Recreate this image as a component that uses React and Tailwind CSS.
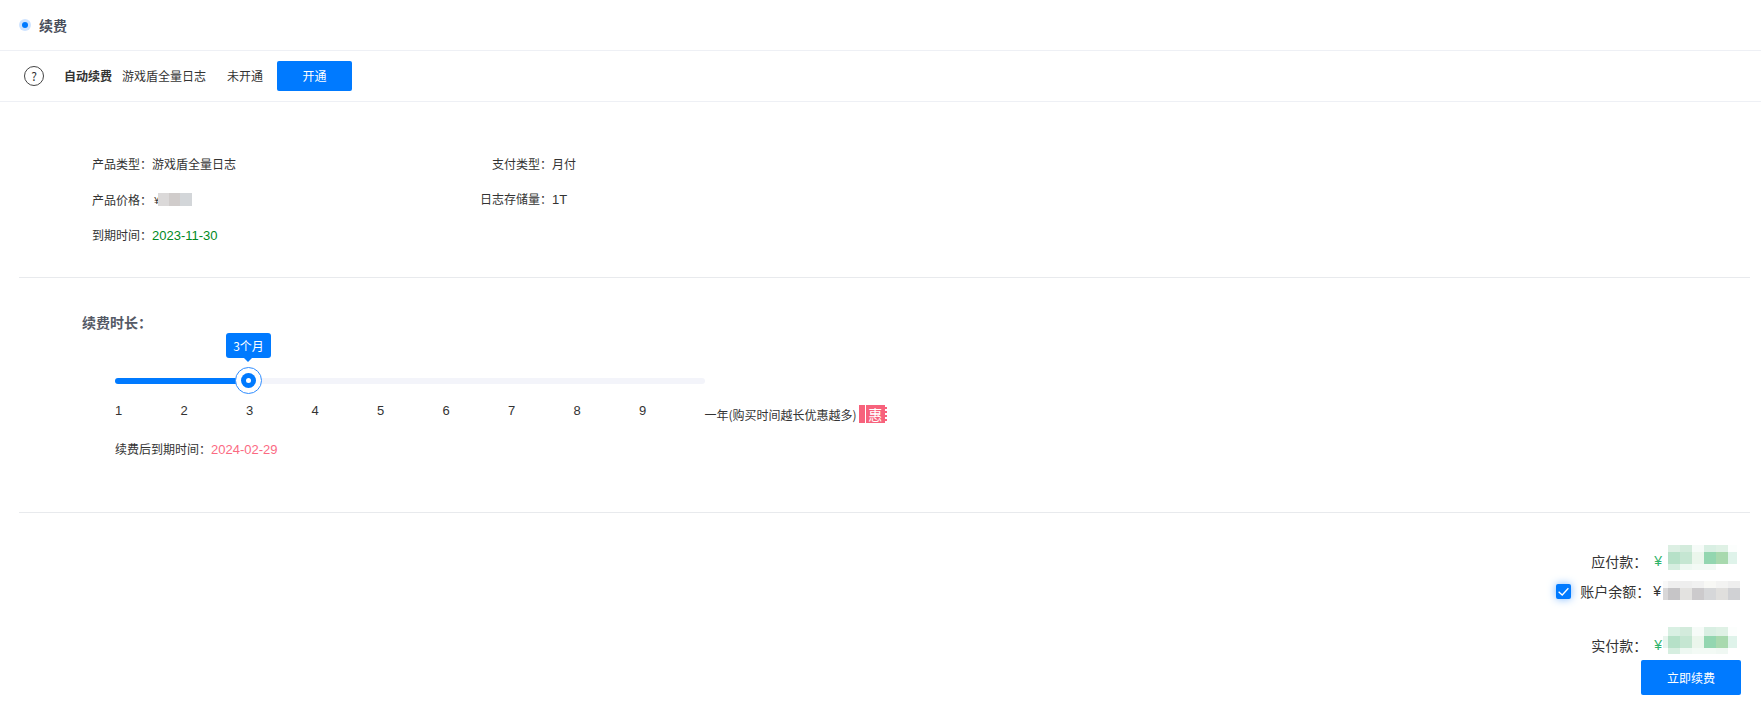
const latin = "font-['Liberation_Sans',sans-serif] text-[13px]";

// 打码区域：每行 [高度, 颜色...]
function Mosaic({ widths, rows, className }) {
  return (
    <div className={"flex shrink-0 flex-col " + className}>
      {rows.map((row, i) => (
        <div key={i} className="flex" style={{ height: row[0] }}>
          {row.slice(1).map((c, j) => (
            <div key={j} style={{ width: widths[j], background: c }} />
          ))}
        </div>
      ))}
    </div>
  );
}

const payWidths = [12, 12, 12, 12, 12, 9];
const payRows = [
  [7, "#dcefe3", "#d3ebdc", "#f6fbf8", "#d9efe3", "#dff1e5", "#fcfefd"],
  [12, "#b6e1c8", "#c5e6d2", "#ebf6ec", "#93d6b0", "#a8d9ae", "#dff3ea"],
  [6, "#d6eee0", "#eef8f2", "#f3faf5", "#f3faf5", "#ffffff", "#ffffff"],
];
const realWidths = [5, 12, 12, 12, 12, 12, 9];
const realRows = [
  [9, "#ffffff", "#d9f0e3", "#d3ebdc", "#f6fbf8", "#d9efe3", "#dff1e5", "#fcfefd"],
  [12, "#e8f5ee", "#b6e1c8", "#c5e6d2", "#ebf6ec", "#93d6b0", "#a8d9ae", "#dff3ea"],
  [6, "#ffffff", "#d6eee0", "#eef8f2", "#f3faf5", "#f3faf5", "#f0f8f3", "#ffffff"],
];
const balanceWidths = [5, 12, 12, 12, 12, 12, 12];
const balanceRows = [
  [7, "#f8f8f8", "#efefef", "#eeeeee", "#f1f1f1", "#f8f8f5", "#f3f3f2", "#eeeeee"],
  [12, "#d8d7d8", "#c6c5c7", "#e3e2e0", "#cccacc", "#d6d7d9", "#e0dfdd", "#d0d1d4"],
];

export default function App() {
  const nums = [1, 2, 3, 4, 5, 6, 7, 8, 9];
  return (
    <div className="h-[720px] w-full overflow-hidden bg-white font-['Noto_Sans_CJK_SC','Noto_Sans',sans-serif] text-[12px] text-[#333]">
      {/* 标题 */}
      <div className="flex h-[51px] items-center border-b border-[#eef0f5] pl-[19px]">
        <span className="flex h-[12px] w-[12px] items-center justify-center rounded-full bg-[#cfe4ff]">
          <span className="h-[6px] w-[6px] rounded-full bg-[#007aff]" />
        </span>
        <span className="ml-[8px] text-[14px] font-bold text-[#4a4f5c]">续费</span>
      </div>

      {/* 自动续费 */}
      <div className="flex h-[51px] items-center border-b border-[#eef0f5] pl-6">
        <span className="flex h-5 w-5 items-center justify-center rounded-full border border-[#444] text-[12px] leading-none">?</span>
        <span className="ml-[20px] font-bold">自动续费</span>
        <span className="ml-[10px]">游戏盾全量日志</span>
        <span className="ml-[21px]">未开通</span>
        <button className="ml-[14px] h-[30px] w-[75px] rounded-[2px] bg-[#007aff] text-white">开通</button>
      </div>

      {/* 产品信息 */}
      <div className="ml-[19px] mr-[11px] h-[176px] border-b border-[#e8eaed] pt-[53px]">
        <div className="grid grid-cols-[400px_auto] justify-start gap-y-[17px] pl-[73px] leading-[18px]">
          <div>产品类型：游戏盾全量日志</div>
          <div>支付类型：月付</div>
          <div className="flex items-center">
            产品价格：
            <span className="-mr-[2px] ml-[2px] text-[10px]">¥</span>
            <span className="relative flex h-[13px]">
              <span className="w-[11px] bg-[#dbd9d9]" />
              <span className="w-[11px] bg-[#d0cccb]" />
              <span className="w-[12px] bg-[#d3d6d9]" />
            </span>
          </div>
          <div className="-ml-[12px]">日志存储量：<span className={latin}>1T</span></div>
          <div>到期时间：<span className={latin + " text-[#008a1e]"}>2023-11-30</span></div>
        </div>
      </div>

      {/* 续费时长 */}
      <div className="ml-[19px] mr-[11px] h-[235px] border-b border-[#e8eaed] pl-[63px]">
        <div className="pt-[34px] text-[14px] font-bold leading-[20px] text-[#555a66]">续费时长：</div>
        <div className="relative ml-[33px] mt-[1px] h-[61px] w-[590px]">
          <div className="absolute left-0 top-[45px] h-[6px] w-full rounded-full bg-[#f3f4fa]" />
          <div className="absolute left-0 top-[45px] h-[6px] w-[133px] rounded-full bg-[#007aff]" />
          <div className="absolute left-[120px] top-[34px] flex h-[27px] w-[27px] items-center justify-center rounded-full border border-[#2f8dff] bg-white">
            <span className="flex h-[15px] w-[15px] items-center justify-center rounded-full bg-[#007aff]">
              <span className="h-[5px] w-[5px] rounded-full bg-white" />
            </span>
          </div>
          <div className="absolute left-[111px] top-0 flex h-[25px] w-[45px] items-center justify-center rounded-[3px] bg-[#007aff] text-white">3个月</div>
          <div className="absolute left-[129px] top-[25px] h-0 w-0 border-x-[4px] border-t-[4px] border-x-transparent border-t-[#007aff]" />
        </div>
        <div className="ml-[33px] mt-[8px] flex h-[19px] items-start leading-[18px]">
          {nums.map((n) => (
            <span key={n} className={"w-[65.5px] " + latin}>{n}</span>
          ))}
          <span className="mt-[4px]">一年(购买时间越长优惠越多)</span>
          <span className="ml-[2px] mt-[3px] flex h-[18px] w-[28px] bg-[#f7627c] text-white">
            <span className="w-[7px] border-r border-white" />
            <span className="flex flex-1 items-center justify-center border-r-2 border-dotted border-white text-[14px]">惠</span>
          </span>
        </div>
        <div className="ml-[33px] mt-[19px] leading-[18px]">
          续费后到期时间：<span className={latin + " text-[#fb6a82]"}>2024-02-29</span>
        </div>
      </div>

      {/* 结算 */}
      <div className="flex flex-col items-end pr-[20px] text-[14px]">
        <div className="mt-[33px] flex h-[30px] items-center">
          <span>应付款：</span>
          <span className="ml-[7px] font-['Liberation_Sans',sans-serif] text-[#2fb36a]">¥</span>
          <Mosaic widths={payWidths} rows={payRows} className="mb-[7px] ml-[6px] mr-[4px]" />
        </div>
        <div className="flex h-[30px] items-center">
          <span className="mr-[9px] flex h-[15px] w-[15px] items-center justify-center rounded-[2px] bg-[#007aff] shadow-[0_0_8px_#7db8ff]">
            <svg width="13" height="13" viewBox="0 0 12 12" fill="none" stroke="white" strokeWidth="1.2"><path d="M1.5 6.2 4.8 9.2 10.5 3" /></svg>
          </span>
          <span>账户余额：</span>
          <span className="ml-[3px] font-['Liberation_Sans',sans-serif]">¥</span>
          <Mosaic widths={balanceWidths} rows={balanceRows} className="mb-[1px] ml-[2px] mr-[1px]" />
        </div>
        <div className="mt-[25px] flex h-[29px] items-center">
          <span>实付款：</span>
          <span className="ml-[7px] font-['Liberation_Sans',sans-serif] text-[#2fb36a]">¥</span>
          <Mosaic widths={realWidths} rows={realRows} className="mb-[11px] ml-[1px] mr-[4px]" />
        </div>
        <button className="h-[35px] w-[100px] rounded-[2px] bg-[#007aff] text-[12px] text-white">立即续费</button>
      </div>
    </div>
  );
}
